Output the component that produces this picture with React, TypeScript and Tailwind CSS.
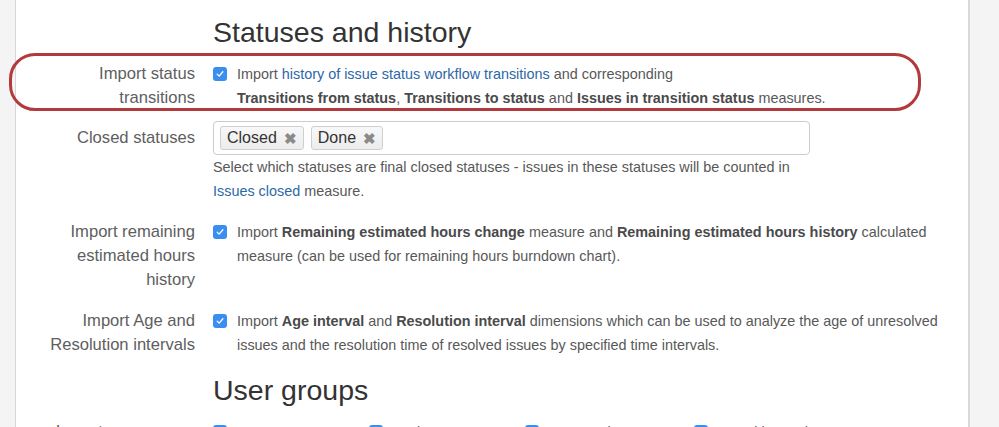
import React from 'react';

const Check = () => (
  <span className="mt-[5px] flex h-[14px] w-[14px] shrink-0 items-center justify-center rounded-[3px] bg-[#3a8ef0]">
    <svg viewBox="0 0 14 14" className="h-[10px] w-[10px]">
      <path d="M3 7.2 L5.8 10 L11 3.8" fill="none" stroke="#fff" strokeWidth="1.8" strokeLinecap="round" strokeLinejoin="round" />
    </svg>
  </span>
);

const Tag = ({ label }: { label: string }) => (
  <span className="flex h-[24px] items-center gap-[7px] rounded-[3px] border border-[#cfcfcf] bg-gradient-to-b from-[#f8f8f8] to-[#ececec] px-[6px] text-[16px] text-[#333]">
    {label}
    <span className="text-[15px] font-bold leading-none text-[#8a8a8a]">✖</span>
  </span>
);

const Row = ({ label, children, className = '' }: { label: React.ReactNode; children: React.ReactNode; className?: string }) => (
  <div className={`flex ${className}`}>
    <div className="w-[179px] shrink-0 text-right text-[16.6px] leading-[24px] text-[#5e5e5e]">{label}</div>
    <div className="ml-[18px] flex-1">{children}</div>
  </div>
);

export default function App() {
  return (
    <div className="flex h-[427px] w-[999px] overflow-hidden bg-[#f4f4f4] font-['Liberation_Sans',Arial,sans-serif]">
      <div className="w-[16px] shrink-0 border-r border-[#d6d6d6]" />
      <div className="relative w-[954px] shrink-0 border-r-2 border-[#d8d8d8] bg-white">
        {/* annotation */}
        <div className="absolute left-[-7px] top-[53px] h-[58px] w-[912px] rounded-[26px] border-[3px] border-[#b23a3c]" />

        <h2 className="ml-[197px] pt-[16px] text-[28.5px] leading-[32px] text-[#333]">Statuses and history</h2>

        <Row label={<>Import status<br />transitions</>} className="mt-[14px]">
          <div className="flex gap-[10px] text-[14.4px] leading-[24px] text-[#585858]">
            <Check />
            <p>
              Import <span className="text-[#2d67a8]">history of issue status workflow transitions</span> and corresponding
              <br />
              <b className="text-[#4a4a4a]">Transitions from status</b>, <b className="text-[#4a4a4a]">Transitions to status</b> and{' '}
              <b className="text-[#4a4a4a]">Issues in transition status</b> measures.
            </p>
          </div>
        </Row>

        <Row label={<span className="block pt-[5px]">Closed statuses</span>} className="mt-[11px]">
          <div className="flex h-[34px] w-[597px] items-center gap-[7px] rounded-[4px] border border-[#cccccc] px-[6px]">
            <Tag label="Closed" />
            <Tag label="Done" />
          </div>
          <p className="text-[14.4px] leading-[24px] text-[#585858]">
            Select which statuses are final closed statuses - issues in these statuses will be counted in
            <br />
            <span className="text-[#2d67a8]">Issues closed</span> measure.
          </p>
        </Row>

        <Row label={<>Import remaining<br />estimated hours<br />history</>} className="mt-[17px]">
          <div className="flex gap-[10px] text-[14.4px] leading-[24px] text-[#585858]">
            <Check />
            <p>
              Import <b className="text-[#4a4a4a]">Remaining estimated hours change</b> measure and{' '}
              <b className="text-[#4a4a4a]">Remaining estimated hours history</b> calculated
              <br />
              measure (can be used for remaining hours burndown chart).
            </p>
          </div>
        </Row>

        <Row label={<>Import Age and<br />Resolution intervals</>} className="mt-[17px]">
          <div className="flex gap-[10px] text-[14.4px] leading-[24px] text-[#585858]">
            <Check />
            <p>
              Import <b className="text-[#4a4a4a]">Age interval</b> and <b className="text-[#4a4a4a]">Resolution interval</b> dimensions which can be used to analyze the age of unresolved
              <br />
              issues and the resolution time of resolved issues by specified time intervals.
            </p>
          </div>
        </Row>

        <h2 className="ml-[197px] mt-[17px] text-[28.5px] leading-[32px] text-[#333]">User groups</h2>

        <Row label="Import user groups" className="mt-[14px]">
          <div className="flex gap-[10px] text-[14.4px] leading-[24px] text-[#585858]">
            <div className="flex w-[146px] gap-[10px]"><Check /><span>Reporter group</span></div>
            <div className="flex w-[146px] gap-[10px]"><Check /><span>Assignee group</span></div>
            <div className="flex w-[159px] gap-[10px]"><Check /><span>Issue author group</span></div>
            <div className="flex gap-[10px]"><Check /><span>Transition author group</span></div>
          </div>
        </Row>
      </div>
      <div className="flex-1" />
    </div>
  );
}
